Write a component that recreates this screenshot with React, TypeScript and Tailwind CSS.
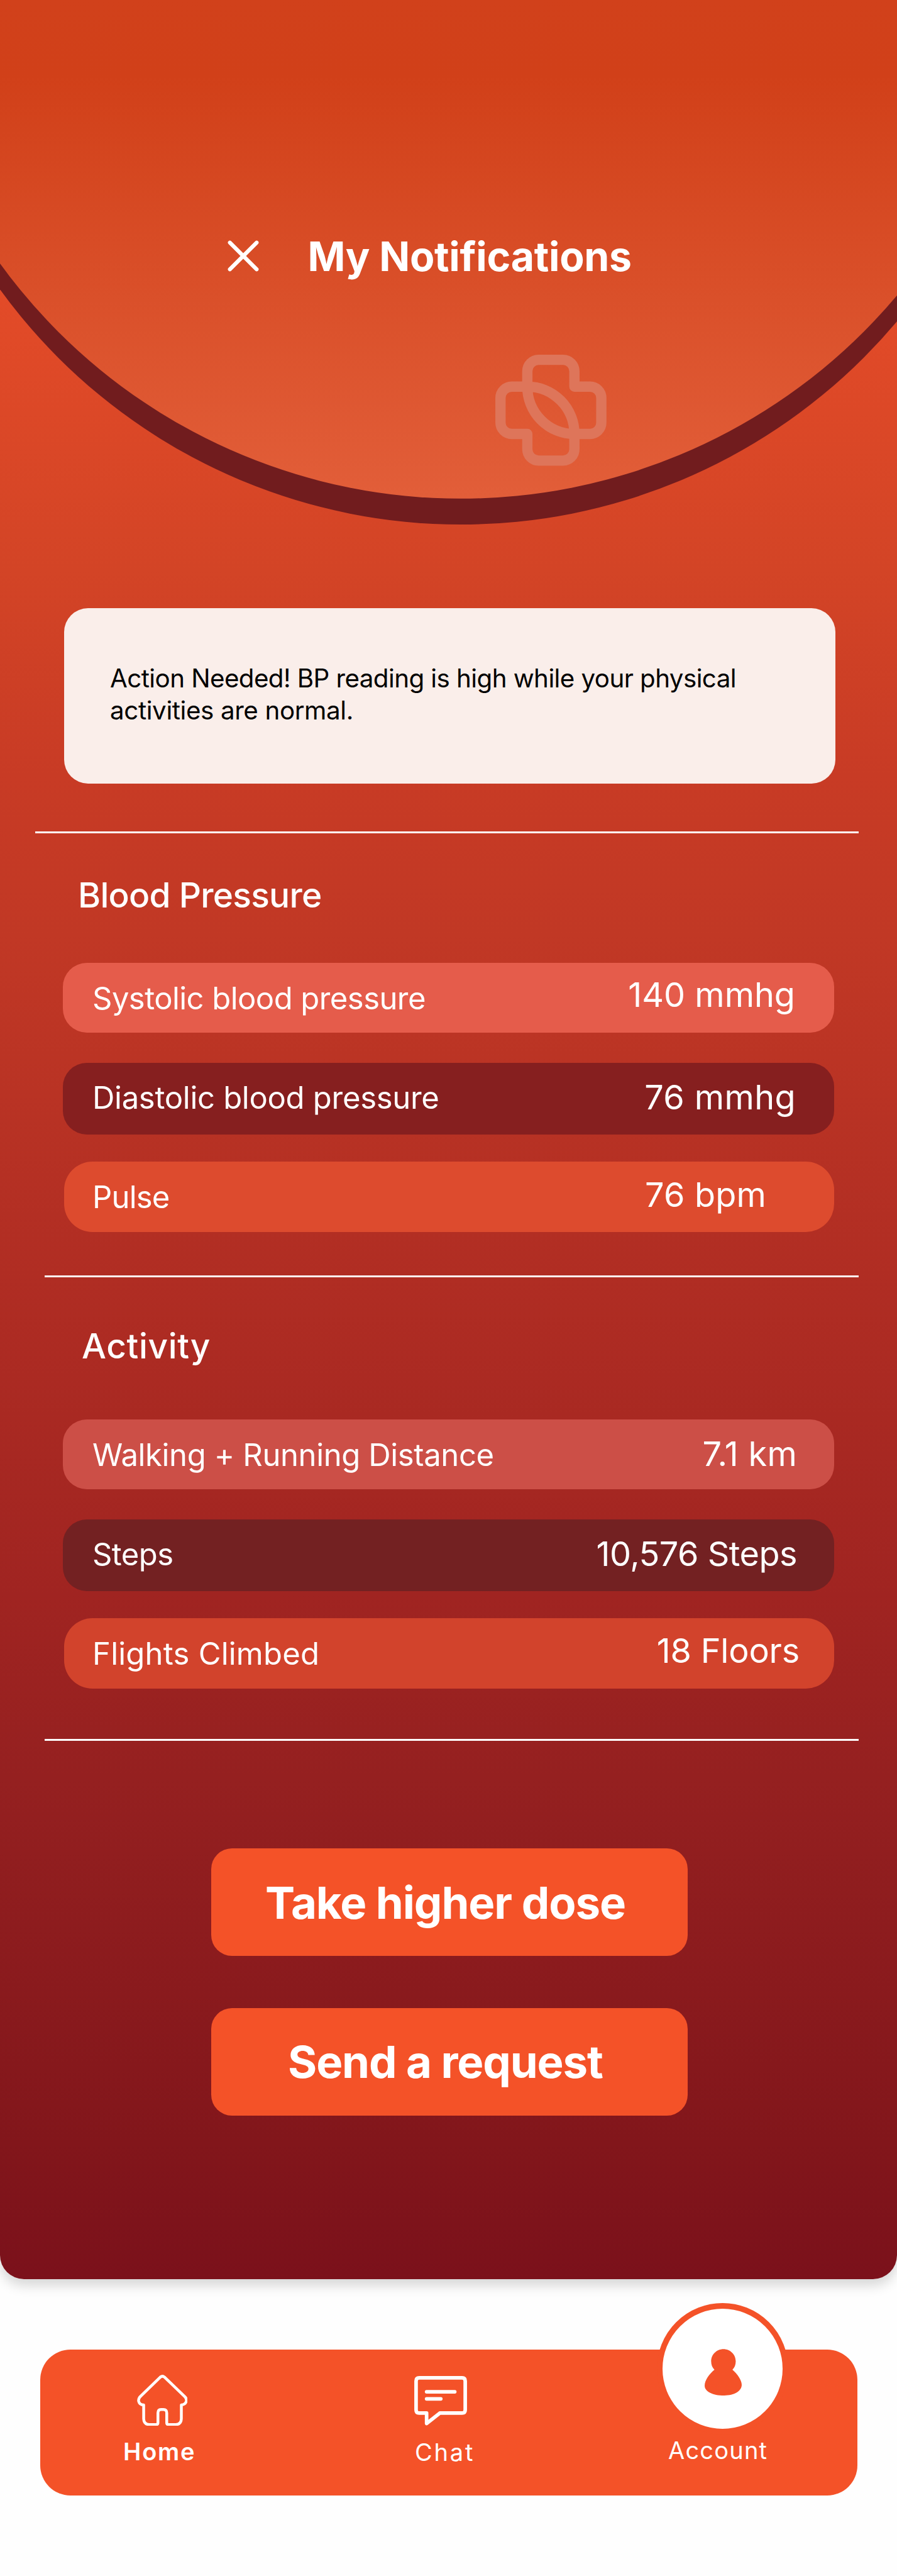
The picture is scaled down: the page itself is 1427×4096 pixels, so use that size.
type Row = {
  label: string;
  value: string;
  box: string;
  labelClass: string;
  valueClass: string;
};

const bloodPressure: Row[] = [
  {
    label: "Systolic blood pressure",
    value: "140 mmhg",
    box: "mt-[68.6px] ml-[100px] h-[111px] w-[1227px] rounded-[38px] bg-[#e55c4b]",
    labelClass: "pt-[2px] pl-[47px] tracking-[-0.56px]",
    valueClass: "mr-[62px] pb-[9px] tracking-[0px]",
  },
  {
    label: "Diastolic blood pressure",
    value: "76 mmhg",
    box: "mt-[48px] ml-[100px] h-[114px] w-[1227px] rounded-[38px] bg-[#861f1f]",
    labelClass: "pb-[2px] pl-[47px] tracking-[-0.29px]",
    valueClass: "mr-[61px] pb-[5px] tracking-[0.4px]",
  },
  {
    label: "Pulse",
    value: "76 bpm",
    box: "mt-[43px] ml-[102px] h-[112px] w-[1225px] rounded-[45px] bg-[#dd4b2e]",
    labelClass: "pt-[2px] pl-[45px] tracking-[-0.8px]",
    valueClass: "mr-[108px] pb-[6px] tracking-[0.2px]",
  },
];

const activity: Row[] = [
  {
    label: "Walking + Running Distance",
    value: "7.1 km",
    box: "mt-[78px] ml-[100px] h-[111px] w-[1227px] rounded-[38px] bg-[#cc4f47]",
    labelClass: "pt-[2px] pl-[47px] tracking-[-0.37px]",
    valueClass: "mr-[59px] pb-[2px] tracking-[0.3px]",
  },
  {
    label: "Steps",
    value: "10,576 Steps",
    box: "mt-[48px] ml-[100px] h-[114px] w-[1227px] rounded-[38px] bg-[#732122]",
    labelClass: "pb-[2px] pl-[47px] tracking-[-0.6px]",
    valueClass: "mr-[59px] pb-[5px] tracking-[-0.5px]",
  },
  {
    label: "Flights Climbed",
    value: "18 Floors",
    box: "mt-[43px] ml-[102px] h-[112px] w-[1225px] rounded-[45px] bg-[#d2432c]",
    labelClass: "pt-[2px] pl-[45px] tracking-[0.22px]",
    valueClass: "mr-[55px] pb-[8px] tracking-[-0.2px]",
  },
];

function MetricRow({ row }: { row: Row }) {
  return (
    <div className={`flex items-center justify-between whitespace-nowrap text-white ${row.box}`}>
      <span className={`text-[49px] leading-[60px] ${row.labelClass}`}>{row.label}</span>
      <span className={`text-[54px] leading-[64px] ${row.valueClass}`}>{row.value}</span>
    </div>
  );
}

function HeaderArc() {
  return (
    <svg className="absolute top-0 left-0 h-[842px] w-[1427px]" viewBox="0 0 1800 1062" preserveAspectRatio="none">
      <defs>
        <linearGradient id="dome" gradientUnits="userSpaceOnUse" x1="0" y1="0" x2="0" y2="1000">
          <stop offset="0" stopColor="#d1411b" />
          <stop offset="0.15" stopColor="#d14019" />
          <stop offset="1" stopColor="#e25e39" />
        </linearGradient>
      </defs>
      <circle cx="925" cy="-91" r="1143" fill="#711c1e" />
      <circle cx="925" cy="-143" r="1143" fill="url(#dome)" />
      {/* Interlocked cross emblem */}
      <path
        transform="translate(960 680) scale(0.33333)"
        fill="none"
        stroke="#de755a"
        strokeWidth="62"
        strokeLinejoin="round"
        d="M294.5 286V193A68 68 0 0 1 362 125H510A68 68 0 0 1 578 193V286H672A68 68 0 0 1 740 354V503A68 68 0 0 1 672 571H578A284 285 0 0 1 294.5 286H201A68 68 0 0 0 133 354V503A68 68 0 0 0 201 571H294.5V663A68 68 0 0 0 362 731H510A68 68 0 0 0 578 663V571A284 285 0 0 0 294.5 286Z"
      />
    </svg>
  );
}

function CloseIcon() {
  return (
    <svg className="h-[50px] w-[50px]" viewBox="0 0 50 50" fill="none" stroke="#fff" strokeWidth="6.2" strokeLinecap="round">
      <path d="M3.7 3.7L46.3 46.3M46.3 3.7L3.7 46.3" />
    </svg>
  );
}

function HomeIcon() {
  return (
    <svg className="ml-[21.5px] h-[81.6px] w-[80.8px]" viewBox="132 72 306 309" fill="none" stroke="#fff" strokeWidth="17" strokeLinejoin="round">
      <path d="M273 86Q285 76 297 86L420 204Q432 216 429 231Q424 251 399 254V337Q398 371 365 372H322Q311 372 311 361V302Q311 281 291 281H278Q258 281 258 302V361Q258 372 247 372H206Q173 371 172 337V254Q147 253 142 232Q139 216 151 204Z" />
    </svg>
  );
}

function ChatIcon() {
  return (
    <svg className="ml-[-0.6px] h-[78.5px] w-[84px]" viewBox="66 82 318 297" fill="none" stroke="#fff" strokeWidth="21.5" strokeLinejoin="round" strokeLinecap="round">
      <path d="M96 93H354Q373 93 373 112V286Q373 305 354 305H220L140.500 368V305H96Q77 305 77 286V112Q77 93 96 93Z" />
      <path d="M140.500 177H310M140.500 219.500H226" />
    </svg>
  );
}

function PersonIcon() {
  return (
    <svg className="ml-[3px] h-[74px] w-[59px]" viewBox="402 335 223 280" fill="#f45228">
      <path d="M515 335.500C556 335.500 589 368 589 409C589 430 582 448 569 460C597 484 625 522 625 551C625 588 580 615 520 615C447 615 402 589 402 556C402 522 431 485 461 460C448 448 441 430 441 409C441 368 474 335.500 515 335.500Z" />
    </svg>
  );
}

export default function App() {
  return (
    <div className="h-[4096px] w-[1427px] overflow-hidden bg-[#fefefe] font-['Inter',sans-serif]">
      <main className="relative h-[3623.5px] rounded-b-[38px] bg-[linear-gradient(180deg,#e44c28_0%,#e34b28_12.7%,#d34426_25%,#c83b25_34%,#c13825_41%,#b02d23_56%,#a02421_70%,#952020_78%,#82161b_94%,#7b111b_100%)] shadow-[0_10px_19px_rgba(0,0,0,0.16)]">
        <HeaderArc />
        <div className="relative flex flex-col">
          <header className="flex h-[814px] items-center pl-[362px] text-white">
            <CloseIcon />
            <h1 className="pt-[1px] pl-[77.5px] text-[64.3px] leading-[80px] font-bold tracking-[-0.27px] whitespace-nowrap">My Notifications</h1>
          </header>

          <section className="mt-[153px] ml-[102px] h-[279px] w-[1227px] rounded-[38px] bg-[#faeeea] pt-[87px] pl-[73px] text-[40.3px] leading-[50.7px] whitespace-nowrap text-black">
            <p className="tracking-[-0.56px]">Action Needed! BP reading is high while your physical</p>
            <p className="tracking-[-0.37px]">activities are normal.</p>
          </section>

          <div className="mt-[76px] ml-[55.5px] h-[3px] w-[1310px] bg-white" />
          <h2 className="mt-[62.5px] ml-[124px] text-[55px] leading-[70px] font-medium tracking-[-0.73px] text-white">Blood Pressure</h2>
          <div className="mt-[5px] flex flex-col">
            {bloodPressure.map((row) => (
              <MetricRow key={row.label} row={row} />
            ))}
          </div>

          <div className="mt-[69px] ml-[71px] h-[3px] w-[1295px] bg-white" />
          <h2 className="mt-[74px] ml-[130px] text-[55px] leading-[70px] font-medium tracking-[0.64px] text-white">Activity</h2>
          <div className="mt-[4px] flex flex-col">
            {activity.map((row) => (
              <MetricRow key={row.label} row={row} />
            ))}
          </div>

          <div className="mt-[80px] ml-[71px] h-[3px] w-[1295px] bg-white" />
          <button className="mt-[171px] ml-[336px] h-[171px] w-[758px] rounded-[33px] bg-[#f45228] pt-[3px] pl-[86px] text-left text-[70.7px] font-bold tracking-[-1.09px] whitespace-nowrap text-white">
            Take higher dose
          </button>
          <button className="mt-[82.6px] ml-[336px] h-[171px] w-[758px] rounded-[33px] bg-[#f45228] pt-[2px] pl-[122px] text-left text-[70.7px] font-bold tracking-[-1.15px] whitespace-nowrap text-white">
            Send a request
          </button>
        </div>
      </main>

      <nav className="relative mt-[112.8px] ml-[64px] flex h-[232px] w-[1299.5px] rounded-[48px] bg-[#f45228] text-white">
        <a className="ml-[132px] flex w-[464px] flex-col items-start pt-[39.6px]">
          <HomeIcon />
          <span className="mt-[17px] text-[38px] leading-[48px] font-semibold tracking-[1.8px]">Home</span>
        </a>
        <a className="flex w-[403px] flex-col items-start pt-[42.2px]">
          <ChatIcon />
          <span className="mt-[18px] text-[38px] leading-[48px] tracking-[2.8px]">Chat</span>
        </a>
        <a className="flex flex-col items-start pt-[135.5px]">
          <span className="text-[38px] leading-[48px] tracking-[1.2px]">Account</span>
        </a>
        {/* Active tab bubble overlapping the bar */}
        <div className="absolute top-[-74.4px] left-[980.9px] flex h-[209.2px] w-[209.2px] items-center justify-center rounded-full border-[9.5px] border-[#f45228] bg-white pt-[10px]">
          <PersonIcon />
        </div>
      </nav>
    </div>
  );
}
